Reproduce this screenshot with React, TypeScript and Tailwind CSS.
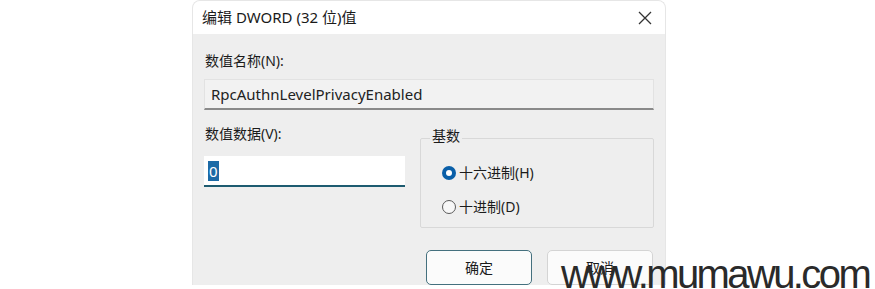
import React from "react";

const font = { fontFamily: '"Noto Sans", "Noto Sans CJK SC", sans-serif' };

function Radio({ checked, label }: { checked?: boolean; label: string }) {
  return (
    <div className="flex items-center gap-[3px] text-[14px] text-[#1b1b1b]">
      {checked ? (
        <span className="flex h-[14px] w-[14px] items-center justify-center rounded-full bg-[#0a5fa8]">
          <span className="h-[6px] w-[6px] rounded-full bg-white" />
        </span>
      ) : (
        <span className="h-[14px] w-[14px] rounded-full border border-[#5a5a5a] bg-[#f7f7f7]" />
      )}
      <span>{label}</span>
    </div>
  );
}

export default function App() {
  return (
    <div
      className="relative h-[289px] w-[875px] overflow-hidden bg-white"
      style={font}
    >
      <div className="ml-[192px] w-[474px] overflow-hidden rounded-t-[8px] border-x border-t border-[#e6e6e6] bg-[#eeeeee]">
        {/* title bar */}
        <div className="flex h-[33px] items-center justify-between bg-white pl-[9px] pr-[10px]">
          <span className="text-[15px] text-[#1a1a1a]">编辑 DWORD (32 位)值</span>
          <svg width="14" height="14" viewBox="0 0 14 14" className="mr-[3px]">
            <path d="M1 1 L13 13 M13 1 L1 13" stroke="#333" strokeWidth="1.3" />
          </svg>
        </div>

        <div className="px-[11px] pt-[17px]">
          <div className="pl-[1px] text-[14px] leading-[20px] text-[#1b1b1b]">数值名称(N):</div>
          <div className="mt-[8px] flex h-[31px] items-center border border-b-2 border-[#e2e2e2] border-b-[#8a8a8a] bg-[#f2f2f2] pl-[6px] text-[15px] text-[#222]">
            RpcAuthnLevelPrivacyEnabled
          </div>

          <div className="mt-[14px] flex">
            <div className="w-[201px]">
              <div className="pl-[1px] text-[14px] leading-[20px] text-[#1b1b1b]">数值数据(V):</div>
              <div className="mt-[12px] flex h-[31px] items-center border-b-2 border-[#1d5b70] bg-white pl-[4px]">
                <span className="bg-[#1c6aa6] px-[1px] text-[15px] leading-[20px] text-white">0</span>
              </div>
            </div>

            <div className="relative ml-[15px] mt-[14px] h-[90px] flex-1 rounded-[2px] border border-[#d8d8d8]">
              <span className="absolute -top-[13px] left-[9px] bg-[#eeeeee] px-[2px] text-[14px] leading-[20px] text-[#1b1b1b]">
                基数
              </span>
              <div className="flex flex-col gap-[13px] pl-[21px] pt-[23px]">
                <Radio checked label="十六进制(H)" />
                <Radio label="十进制(D)" />
              </div>
            </div>
          </div>

          <div className="mt-[22px] flex justify-end gap-[15px] pr-[1px]">
            <button className="flex h-[35px] w-[106px] items-center justify-center rounded-[5px] border border-[#44707e] bg-[#fbfbfb] text-[14px] text-[#1b1b1b]">
              确定
            </button>
            <button className="flex h-[35px] w-[106px] items-center justify-center rounded-[5px] border border-[#d4d4d4] bg-[#fbfbfb] text-[14px] text-[#1b1b1b]">
              取消
            </button>
          </div>
        </div>
      </div>

      <div
        className="absolute left-[561px] top-[250px] text-[40px] leading-[48px] tracking-[-2.6px] text-[#2a2a2a]"
        style={{ fontFamily: '"Liberation Sans", Arial, sans-serif' }}
      >
        www.mumawu.com
      </div>
    </div>
  );
}
